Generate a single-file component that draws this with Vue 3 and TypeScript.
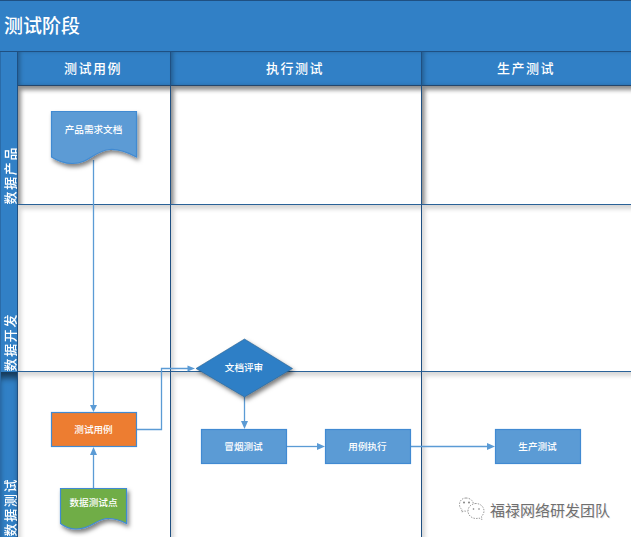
<script setup lang="ts">
const columns: string[] = ['测试用例', '执行测试', '生产测试']
const rows: string[] = ['数据产品', '数据开发', '数据测试']

interface Arrow { line: string; head: string }
const arrows: Arrow[] = [
  { line: '93.5,160 93.5,406', head: '93.5,412 90,405 97,405' },
  { line: '93.5,488 93.5,454', head: '93.5,447 90,455 97,455' },
  { line: '137,429.5 161.5,429.5 161.5,368.5 189,368.5', head: '195,368.5 187.5,365.5 187.5,371.5' },
  { line: '244.5,397 244.5,422', head: '244.5,429 241,421 248,421' },
  { line: '287,446.5 318,446.5', head: '325,446.5 317,443 317,450' },
  { line: '411,446.5 488,446.5', head: '495,446.5 487,443 487,450' },
]

interface Box { x: number; y: number; w: number; h: number; label: string; fill: string }
const boxes: Box[] = [
  { x: 51.5, y: 412.5, w: 85, h: 34, label: '测试用例', fill: '#ed7d31' },
  { x: 201.5, y: 429.5, w: 85, h: 34, label: '冒烟测试', fill: '#5b9bd5' },
  { x: 325.5, y: 429.5, w: 85, h: 34, label: '用例执行', fill: '#5b9bd5' },
  { x: 495.5, y: 429.5, w: 85, h: 34, label: '生产测试', fill: '#5b9bd5' },
]
</script>

<template>
  <div class="page">
    <header class="title">测试阶段</header>
    <div class="grid">
      <div class="corner"></div>
      <div v-for="c in columns" :key="c" class="col-head">{{ c }}</div>
      <template v-for="r in rows" :key="r">
        <div class="row-head"><span>{{ r }}</span></div>
        <div v-for="c in columns" :key="c" class="cell"></div>
      </template>
    </div>

    <svg class="canvas" width="631" height="537" viewBox="0 0 631 537">
      <defs>
        <filter id="shade" x="-20%" y="-20%" width="150%" height="150%">
          <feDropShadow dx="2" dy="3" stdDeviation="2" flood-color="#000" flood-opacity="0.5" />
        </filter>
      </defs>

      <g class="connector">
        <polyline v-for="a in arrows" :key="a.line" :points="a.line" />
      </g>
      <polygon v-for="a in arrows" :key="a.head" class="head" :points="a.head" />

      <path
        class="shape"
        filter="url(#shade)"
        fill="#5b9bd5"
        d="M51.5 111.5H136.5V157C125 151 118 149 110 149.500C94 150.500 90 163.500 72 163.500C63 163.500 57 160.500 51.500 157Z"
      />
      <text class="label" x="93.500" y="133">产品需求文档</text>

      <path
        class="shape"
        filter="url(#shade)"
        fill="#70ad47"
        d="M60.500 488.500H126.500V523.500C120 520 115 518.500 108 518.500C96 518.500 92 529 76 529C70 529 65 527 60.500 523.500Z"
      />
      <text class="label" x="93.500" y="506">数据测试点</text>

      <polygon
        class="diamond"
        filter="url(#shade)"
        points="244.500,339 292.500,368.500 244.500,397 196,368.500"
      />
      <text class="label" x="244" y="371">文档评审</text>

      <g v-for="b in boxes" :key="b.label + b.x">
        <rect
          class="shape"
          :x="b.x"
          :y="b.y"
          :width="b.w"
          :height="b.h"
          :fill="b.fill"
        />
        <text class="label" :x="b.x + b.w / 2 - 0.5" :y="b.y + 20">{{ b.label }}</text>
      </g>
    </svg>

    <div class="mark">
      <svg class="mark-icon" width="26" height="24" viewBox="0 0 26 24">
        <path d="M7 1C3 1 0.500 4 0.500 7.500C0.500 10 1.500 11.500 3 12.500L2.500 15L5.500 14C6.500 14.300 7.500 14.300 8.500 14.200" />
        <path d="M7 1C11 1 14 3.500 14.500 7" />
        <path d="M17 6.500C13 6.500 9 9.500 9 14C9 18.500 13 21.500 17 21.500C18 21.500 19 21.300 20 21L23 22.500L22.500 19.500C24 18 25 16 25 14C25 9.500 21 6.500 17 6.500Z" />
        <circle cx="5" cy="5.500" r="0.900" />
        <circle cx="10" cy="5.500" r="0.900" />
        <circle cx="14.500" cy="12" r="0.800" />
        <circle cx="20" cy="12" r="0.800" />
      </svg>
      <span>福禄网络研发团队</span>
    </div>
  </div>
</template>

<style scoped>
.page {
  position: relative;
  width: 631px;
  height: 537px;
  overflow: hidden;
  background: #fff;
  font-family: "Noto Sans CJK SC", "Liberation Sans", sans-serif;
}
.title {
  box-sizing: border-box;
  height: 52px;
  padding: 0 0 4px 4px;
  display: flex;
  align-items: center;
  background: #3180c6;
  border-top: 1px solid #1f5082;
  border-bottom: 1px solid #1f5082;
  color: #fff;
  font-size: 19px;
  font-weight: 500;
}
.grid {
  display: grid;
  grid-template-columns: 18px 153px 251px 210px;
  grid-template-rows: 34px 119px 167px 165px;
}
.corner {
  background: #3180c6;
  border-right: 1px solid #1f5082;
  border-left: 1px solid #2a6ba8;
}
.col-head {
  box-sizing: border-box;
  display: flex;
  align-items: center;
  justify-content: center;
  padding: 0 2px 3px 0;
  background: #3180c6;
  border-right: 1px solid #1f5082;
  border-bottom: 1px solid #24466b;
  box-shadow: inset 3px 0 4px -1px rgba(0, 0, 0, 0.28);
  color: #fff;
  font-size: 13px;
  font-weight: 500;
  letter-spacing: 1.500px;
}
.col-head:nth-child(4) {
  border-right: none;
}
.row-head {
  box-sizing: border-box;
  display: flex;
  justify-content: center;
  align-items: flex-end;
  padding-bottom: 1px;
  background: #3180c6;
  border-right: 1px solid #1f5082;
  border-left: 1px solid #2a6ba8;
}
.row-head:nth-child(13) {
  box-shadow: inset 0 8px 6px -2px rgba(0, 0, 0, 0.55);
}
.row-head span {
  writing-mode: vertical-rl;
  text-orientation: sideways;
  transform: rotate(180deg);
  color: #fff;
  font-size: 13px;
  font-weight: 500;
  line-height: 15px;
  letter-spacing: 1.600px;
  white-space: nowrap;
}
.cell {
  box-sizing: border-box;
  background: #fff;
  border-right: 1px solid #1f5082;
  border-bottom: 1px solid #2a6298;
  box-shadow: inset 5px 6px 4px -2px rgba(0, 0, 0, 0.16);
}
.grid > .cell:nth-child(4n) {
  border-right: none;
}
.grid > .cell:nth-child(n + 14) {
  border-bottom: none;
}
.grid > .cell:nth-child(6),
.grid > .cell:nth-child(7),
.grid > .cell:nth-child(8) {
  box-shadow: inset 5px 6px 4px -2px rgba(0, 0, 0, 0.45);
}
.canvas {
  position: absolute;
  inset: 0;
}
.connector polyline {
  fill: none;
  stroke: #5b9bd5;
  stroke-width: 1.300;
}
.head {
  fill: #5b9bd5;
}
.shape {
  stroke: #418ad2;
  stroke-width: 1.200;
}
.diamond {
  fill: #2f7fc6;
  stroke: #2a618f;
  stroke-width: 0.600;
}
.label {
  fill: #fff;
  font-size: 9.600px;
  font-weight: 500;
  text-anchor: middle;
}
.mark {
  position: absolute;
  left: 459px;
  top: 497px;
  display: flex;
  align-items: center;
  gap: 5px;
  color: #6f6f6f;
  font-size: 15px;
  text-shadow: 1px 1px 0 rgba(0, 0, 0, 0.1);
}
.mark-icon path {
  fill: none;
  stroke: #9a9a9a;
  stroke-width: 1;
  stroke-dasharray: 1.500 1.200;
}
.mark-icon circle {
  fill: #777;
}
</style>

<style>
html,
body {
  margin: 0;
  background: #fff;
}
</style>
